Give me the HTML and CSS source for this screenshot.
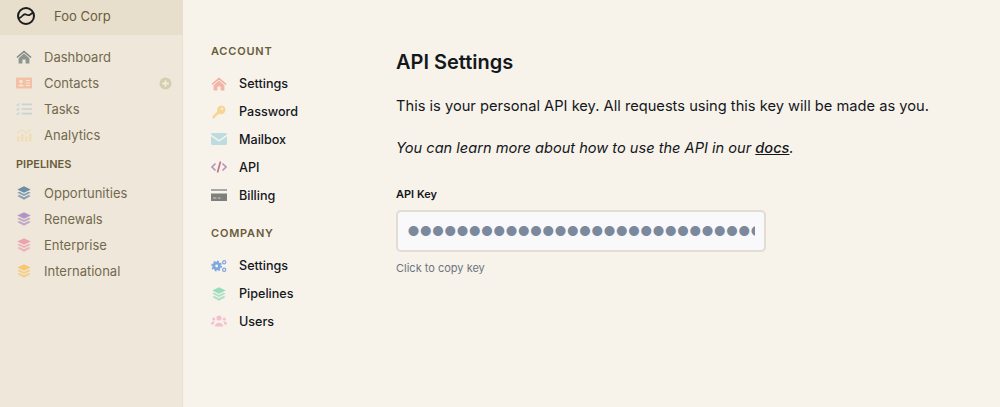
FILE: index.html
```html
<!DOCTYPE html>
<html lang="en">
<head>
  <meta charset="UTF-8">
  <title>API Settings</title>
  <link rel="stylesheet" href="styles.css">
</head>
<body>
  <svg class="defs" width="0" height="0">
    <symbol id="layers" viewBox="0 0 14 14">
      <path d="M7 0.300 13.700 3.500 7 6.700 0.300 3.500Z"/>
      <path d="M2.400 5.700 7 7.900 11.600 5.700 13.700 6.800 7 10 0.300 6.800Z" opacity=".8"/>
      <path d="M2.400 9 7 11.200 11.600 9 13.700 10.100 7 13.700 0.300 10.100Z" opacity=".8"/>
    </symbol>
    <symbol id="home" viewBox="0 0 16 14">
      <path d="M8 0.500 15.500 7 14.600 8 8 2.400 1.400 8 0.500 7Z"/>
      <path d="M8 3.600 13.400 8.200V13.400H9.600V9.600H6.400V13.400H2.600V8.200Z" opacity=".85"/>
    </symbol>
  </svg>

  <aside class="sidebar">
    <div class="brand">
      <svg class="logo" viewBox="0 0 20 20" width="20" height="20">
        <circle cx="10" cy="10" r="8" fill="none" stroke="#1b1c1e" stroke-width="2"/>
        <path d="M3 12C6 12 7 7 10 8.500S14 9 17 6.500" fill="none" stroke="#1b1c1e" stroke-width="1.800"/>
      </svg>
      <span>Foo Corp</span>
    </div>
    <nav class="side-nav">
      <a class="side-link"><svg class="ic c-slate"><use href="#home"/></svg>Dashboard</a>
      <a class="side-link">
        <svg class="ic" viewBox="0 0 16 12">
          <rect y="0.500" width="16" height="11" rx="1" fill="#f3c0a6"/>
          <circle cx="5" cy="4.500" r="1.700" fill="#f9e6da"/>
          <path d="M2.200 9.200C2.400 7 7.600 7 7.800 9.200Z" fill="#f9e6da"/>
          <path d="M9.800 3.500H14M9.800 6H14M9.800 8.500H14" stroke="#f9e6da"/>
        </svg>
        Contacts
        <svg class="plus" viewBox="0 0 14 14">
          <circle cx="7" cy="7" r="6.500" fill="#d6cdb0"/>
          <path d="M7 3.500V10.500M3.500 7H10.500" stroke="#f1ebdd" stroke-width="2"/>
        </svg>
      </a>
      <a class="side-link">
        <svg class="ic" viewBox="0 0 14 12" fill="none" stroke="#c3d4d3" stroke-width="1.500">
          <path d="M5 2H14M5 6H14M5 10H14"/>
          <path d="M0.500 2 1.500 3 3 1M0.500 6 1.500 7 3 5M0.500 10 1.500 11 3 9" stroke-width="1"/>
        </svg>
        Tasks
      </a>
      <a class="side-link">
        <svg class="ic" viewBox="0 0 16 13" fill="#f2dcb8">
          <rect x="1" y="8" width="2.500" height="5"/>
          <rect x="5" y="5.500" width="2.500" height="7.500"/>
          <rect x="9" y="8" width="2.500" height="5"/>
          <rect x="13" y="5" width="2.500" height="8"/>
          <path d="M1 4.500 5.500 1.500 10 4.500 15 1" fill="none" stroke="#f2dcb8" stroke-width="1.200"/>
        </svg>
        Analytics
      </a>
    </nav>
    <h4 class="side-title">PIPELINES</h4>
    <nav class="side-nav">
      <a class="side-link"><svg class="ic c-blue"><use href="#layers"/></svg>Opportunities</a>
      <a class="side-link"><svg class="ic c-purple"><use href="#layers"/></svg>Renewals</a>
      <a class="side-link"><svg class="ic c-rose"><use href="#layers"/></svg>Enterprise</a>
      <a class="side-link"><svg class="ic c-yellow"><use href="#layers"/></svg>International</a>
    </nav>
  </aside>

  <section class="subnav">
    <h4 class="sub-title">ACCOUNT</h4>
    <a class="sub-link"><svg class="ic c-salmon"><use href="#home"/></svg>Settings</a>
    <a class="sub-link">
      <svg class="ic" viewBox="0 0 16 16" fill="#f6d596">
        <path d="M10.500 0.500A5 5 0 1 1 8.300 10L6.500 11.800H5V13.500H3.300V15.300H0.700V12.500L6 7.300A5 5 0 0 1 10.500 0.500Z"/>
        <circle cx="11.500" cy="4.500" r="1.300" fill="#f7f3ea"/>
      </svg>
      Password
    </a>
    <a class="sub-link">
      <svg class="ic" viewBox="0 0 16 12" fill="#bcdcdf">
        <path d="M0 1.500C0 .7.700 0 1.500 0H14.500C15.300 0 16 .7 16 1.500L8 7 0 1.500Z"/>
        <path d="M0 3.300 8 8.700 16 3.300V10.500C16 11.300 15.300 12 14.500 12H1.500C.7 12 0 11.300 0 10.500Z"/>
      </svg>
      Mailbox
    </a>
    <a class="sub-link">
      <svg class="ic" viewBox="0 0 16 12" fill="none" stroke="#b796bc" stroke-width="1.700">
        <path d="M4.500 2.500 1 6 4.500 9.500M11.500 2.500 15 6 11.500 9.500"/>
        <path d="M9.500 0.500 6.500 11.500" stroke="#c0748f"/>
      </svg>
      API
    </a>
    <a class="sub-link">
      <svg class="ic" viewBox="0 0 16 12">
        <rect width="16" height="2" y="0" fill="#a7a7a3"/>
        <rect width="16" height="7.500" y="4.500" fill="#7e7e7c"/>
        <path d="M2 9H5.500M7 9H9.500" stroke="#d0d0cc" stroke-width="1.200"/>
      </svg>
      Billing
    </a>

    <h4 class="sub-title company">COMPANY</h4>
    <a class="sub-link">
      <svg class="ic" viewBox="0 0 17 14" fill="none" stroke="#7ea6e0">
        <circle cx="6" cy="7" r="3" stroke-width="3"/>
        <circle cx="6" cy="7" r="5" stroke-width="1.500" stroke-dasharray="2 1.900"/>
        <circle cx="14" cy="3" r="1.700" stroke-width="1.300"/>
        <circle cx="14" cy="11" r="1.700" stroke-width="1.300"/>
      </svg>
      Settings
    </a>
    <a class="sub-link"><svg class="ic c-mint"><use href="#layers"/></svg>Pipelines</a>
    <a class="sub-link">
      <svg class="ic" viewBox="0 0 16 12" fill="#f5bfcd">
        <circle cx="8" cy="3" r="2.600"/>
        <circle cx="2.700" cy="4" r="1.600"/>
        <circle cx="13.300" cy="4" r="1.600"/>
        <path d="M3.800 11.500C3.800 6.500 12.200 6.500 12.200 11.500Z"/>
        <path d="M0 9C0 6.500 2.500 6 3.800 6.800 3 7.600 2.800 8.500 2.700 9.500H0ZM16 9C16 6.500 13.500 6 12.200 6.800 13 7.600 13.200 8.500 13.300 9.500H16Z"/>
      </svg>
      Users
    </a>
  </section>

  <main class="content">
    <h1>API Settings</h1>
    <p class="lead">This is your personal API key. All requests using this key will be made as you.</p>
    <p class="lead note">You can learn more about how to use the API in our <a href="#">docs</a>.</p>
    <label class="key-label" for="key">API Key</label>
    <input class="key-input" id="key" type="password" value="aaaaaaaaaaaaaaaaaaaaaaaaaaaaaaaaaaaaaaaaaaaaaaaa" readonly>
    <p class="hint">Click to copy key</p>
  </main>
</body>
</html>
```

FILE: styles.css
```css
* {
  box-sizing: border-box;
}

html, body {
  height: 100%;
}

body {
  margin: 0;
  display: flex;
  overflow: hidden;
  font-family: Inter, "Liberation Sans", sans-serif;
  background: #f7f3ea;
  color: #14171c;
}

.defs {
  position: absolute;
}

.ic {
  width: 16px;
  height: 14px;
  flex: none;
}

.c-slate { fill: #7d8583; }
.c-blue { fill: #6c8da8; }
.c-purple { fill: #b395c4; }
.c-rose { fill: #eba3ad; }
.c-yellow { fill: #f5c871; }
.c-salmon { fill: #f2a99b; }
.c-mint { fill: #9adcb9; }

/* left sidebar */
.sidebar {
  width: 183px;
  flex: none;
  background: #efe8da;
  border-right: 1px solid #e7e0d2;
}

.brand {
  height: 35px;
  display: flex;
  align-items: center;
  padding: 0 0 3px 16px;
  gap: 18px;
  background: #e7dfcc;
  font-size: 13px;
  color: #6a5b3a;
}

.logo {
  flex: none;
}

.side-nav {
  display: flex;
  flex-direction: column;
  margin-top: 9px;
}

.side-link {
  height: 26px;
  display: flex;
  align-items: center;
  gap: 12px;
  padding: 0 10px 0 16px;
  font-size: 13px;
  color: #73684f;
}

.plus {
  width: 13px;
  height: 13px;
  margin-left: auto;
}

.side-title {
  margin: 8px 0 -1px;
  padding-left: 16px;
  font-size: 11px;
  line-height: 16px;
  font-weight: 600;
  color: #6a5b3a;
}

/* settings menu */
.subnav {
  width: 185px;
  flex: none;
  padding: 43px 0 0 28px;
}

.sub-title {
  margin: 0 0 11px;
  font-size: 11px;
  line-height: 16px;
  font-weight: 600;
  letter-spacing: .8px;
  color: #6a5b3a;
}

.company {
  margin-top: 16px;
}

.sub-link {
  height: 27.800px;
  display: flex;
  align-items: center;
  gap: 12px;
  font-size: 12.600px;
  font-weight: 500;
}

/* main panel */
.content {
  flex: 1;
  padding: 48px 0 0 28px;
}

h1 {
  margin: 0;
  font-size: 20px;
  line-height: 28px;
  font-weight: 600;
}

.lead {
  margin: 18px 0 0;
  font-size: 14.670px;
  line-height: 24px;
}

.note {
  font-size: 14.600px;
  font-style: italic;
}

.note a {
  color: inherit;
  font-weight: 500;
}

.key-label {
  display: block;
  margin-top: 26px;
  font-size: 11px;
  line-height: 16px;
  font-weight: 600;
}

.key-input {
  display: block;
  width: 370px;
  height: 42px;
  margin-top: 8px;
  padding: 0 9px 6px 6.500px;
  background: #f9f9fb;
  border: 2px solid #e2ddd3;
  border-radius: 5px;
  font-family: Inter, sans-serif;
  font-size: 32px;
  letter-spacing: -5.750px;
  color: #7b899c;
  outline: none;
}

.hint {
  margin: 8px 0 0;
  font-size: 11px;
  line-height: 16px;
  color: #6d7380;
}
```
